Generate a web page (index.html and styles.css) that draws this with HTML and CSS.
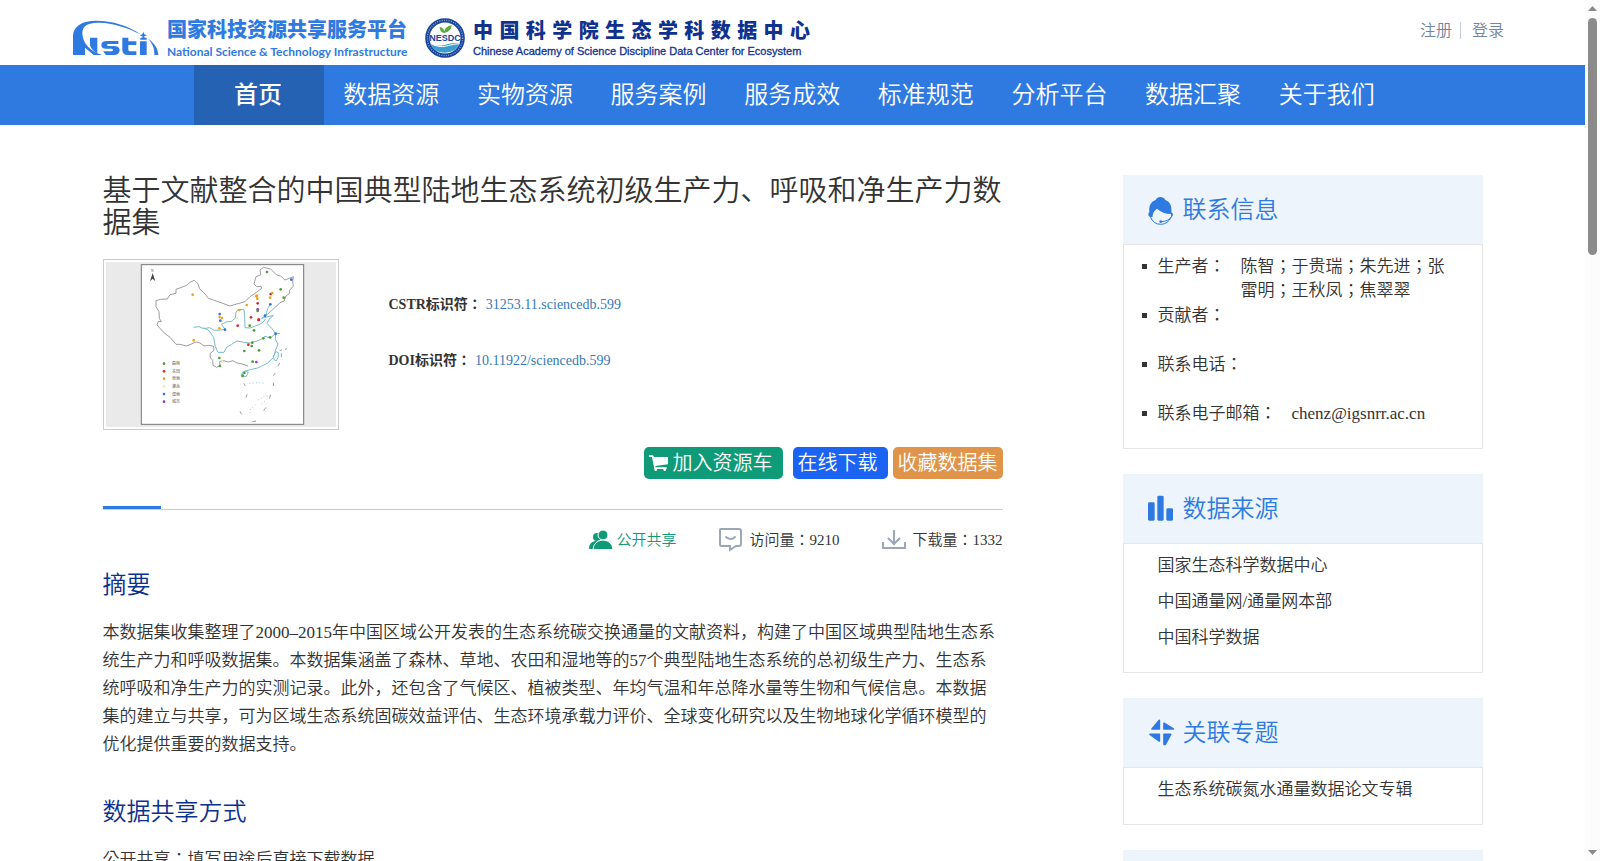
FILE: index.html
```html
<!DOCTYPE html>
<html lang="zh-CN">
<head>
<meta charset="utf-8">
<title>国家生态科学数据中心</title>
<link rel="stylesheet" href="styles.css">
</head>
<body>
<header class="top">
  <a class="nsti" href="#">
    <svg class="nsti-mark" viewBox="0 0 258 108" aria-hidden="true">
      <g fill="#2f7ae1">
        <path d="M0 105V45C3 17 29 2 68 2c53 0 96 15 137 42-44-22-85-35-126-36C46 7 28 17 28 39c0 30 24 56 60 66H62L36 83v22z"/>
        <path d="M51 53h22v47C60 93 53 84 51 76z"/>
        <path d="M136 63H101q-16 0-16 12t16 11h13q6 0 6 4t-6 4H90l9 11h22q19 0 19-14 0-13-19-13h-14q-5 0-5-3t5-3h29z"/>
        <path d="M148 53h18v11h24v11h-24v14q0 5 6 5h18v11h-25q-17 0-17-15z"/>
        <path d="M201 64h20v41h-20zM202 54q9-4 19 0v5h-19z"/>
        <path d="M211 35l3 8 8 3-8 3-3 8-3-8-8-3 8-3z"/>
        <path d="M224 55c20 14 31 31 32 50h-12c1-19-5-34-20-50z"/>
      </g>
    </svg>
    <span class="nsti-text">
      <strong class="nsti-cn">国家科技资源共享服务平台</strong>
      <span class="nsti-en">National Science &amp; Technology Infrastructure</span>
    </span>
  </a>
  <a class="nesdc" href="#">
    <svg class="nesdc-mark" viewBox="0 0 120 120" aria-hidden="true">
      <circle cx="60" cy="60" r="53" fill="#fff" stroke="#17459b" stroke-width="13"/>
      <circle cx="60" cy="60" r="53" fill="none" stroke="#8fa8d4" stroke-width="4" stroke-dasharray="3 4"/>
      <path d="M17 77q22 10 44 3t43-4q-11 28-44 28-32 0-43-27z" fill="#3b9fce"/>
      <path d="M18 77q24 13 46 7t40-7" fill="none" stroke="#fff" stroke-width="3"/>
      <path d="M57 45q-13-3-13-18 12 2 14 13 3-15 22-19-1 19-20 23z" fill="#58ae3c"/>
      <text class="nesdc-seal" x="60" y="70" text-anchor="middle">NESDC</text>
    </svg>
    <span class="nesdc-text">
      <strong class="nesdc-cn">中国科学院生态学科数据中心</strong>
      <span class="nesdc-en">Chinese Academy of Science Discipline Data Center for Ecosystem</span>
    </span>
  </a>
  <div class="account"><a href="#">注册</a><a href="#">登录</a></div>
</header>

<nav class="nav">
  <ul>
    <li class="active"><a href="#">首页</a></li>
    <li><a href="#">数据资源</a></li>
    <li><a href="#">实物资源</a></li>
    <li><a href="#">服务案例</a></li>
    <li><a href="#">服务成效</a></li>
    <li><a href="#">标准规范</a></li>
    <li><a href="#">分析平台</a></li>
    <li><a href="#">数据汇聚</a></li>
    <li><a href="#">关于我们</a></li>
  </ul>
</nav>

<div class="page">
  <main class="detail">
    <h1>基于文献整合的中国典型陆地生态系统初级生产力、呼吸和净生产力数据集</h1>
    <div class="summary">
      <svg class="thumb" viewBox="48 36 690 495" role="img" aria-label="站点分布图">
        <rect x="48" y="36" width="690" height="495" fill="#eaeaea"/>
        <rect x="154" y="44" width="487" height="479" fill="#fff" stroke="#777" stroke-width="3"/>
        <path d="M180 94l8-25 8 25-8-8z" fill="#444"/>
        <text class="map-north" x="183" y="65">N</text>
        <g fill="none" stroke="#8a8a8a" stroke-width="2.5" stroke-linejoin="round">
          <path d="M371 289L357 286 342 288 330 279 318 276 300 284 289 288 270 283 258 283 240 262 224 250 212 237 201 225 205 214 214 215 208 205 207 185 198 170 198 152 212 148 232 147 240 134 258 130 258 118 275 112 290 106 300 97 313 91 323 100 329 116 345 132 355 145 370 150 390 157 420 168 440 162 465 155 480 140 500 127 515 115 513 109 500 110 492 102 498 80 512 75 510 60 520 52 542 57 560 75 572 78 585 90 600 84 610 80 608 95 610 108 598 122 599 130 588 138 582 153 570 158 555 173"/>
          <path d="M371 289l1 12-12 10 1 12 7 8 1 15 11 6 10-5-1-12 12-3 14 4 14-4 10 6 17 4 18 6"/>
        </g>
        <g fill="none" stroke="#78bccb" stroke-width="3" stroke-linejoin="round">
          <path d="M311 232l16-2 14 6 18-3 14 8 18-1 14-2-11-15 14-7 16-2 12-10 2-17 6-8h18l2 20 1 34 15 1 13-5 14-5 13-8 7-10"/>
          <path d="M340 233l17 9 14 20 5 28 8 17h18l8-15 15-9 16-10 22 4 18 2 20-6 12-5 12-9 17 5 12-12 16-2"/>
          <path d="M541 163l-8 12-5 22-13 8M555 173l-12 10-15 14M515 205l35-9-13 12-6 12 15 16 11 15-1 17 8 14-8 21-6 20-18 17-29 14-22 5-18 5"/>
          <path d="M457 367l10-4 8 4-6 12-14 2zM553 330l-3-11 8-14 7 3-1 15-6 10z"/>
        </g>
        <g fill="none" stroke="#a9c9cf" stroke-width="3" stroke-dasharray="3 7">
          <path d="M478 400l20-2 24 1M503 450l24-12 20-2M480 480l20-20M515 462l24-22M478 488l10-2"/>
        </g>
        <path d="M574 310v12M569 339l-5 10M556 369l-6 8M550 398l1 10M461 400l5 8M471 433l-3 10M541 434l-2 12M450 484l5 9M528 472l-7 10M487 515l11-2M569 302l7-3M585 298l6-2" stroke="#8d8d8d" stroke-width="2.5"/>
        <g fill="#46a02f"><circle cx="531" cy="66" r="4"/><circle cx="572" cy="118" r="4"/><circle cx="581" cy="143" r="4"/><circle cx="503" cy="183" r="4"/><circle cx="479" cy="227" r="4"/><circle cx="492" cy="241" r="4"/><circle cx="520" cy="265" r="4"/><circle cx="540" cy="262" r="4"/><circle cx="487" cy="278" r="4"/><circle cx="485" cy="288" r="4"/><circle cx="463" cy="303" r="4"/><circle cx="507" cy="301" r="4"/><circle cx="488" cy="335" r="4"/><circle cx="388" cy="324" r="4"/><circle cx="390" cy="348" r="4"/><circle cx="463" cy="369" r="4"/><circle cx="458" cy="377" r="4"/><circle cx="222" cy="341" r="4"/></g>
        <g fill="#df2430"><circle cx="542" cy="132" r="4"/><circle cx="503" cy="160" r="4"/><circle cx="483" cy="202" r="4"/><circle cx="443" cy="227" r="4"/><circle cx="506" cy="209" r="5"/><circle cx="475" cy="284" r="4"/><circle cx="222" cy="364" r="4"/></g>
        <g fill="#eaa31e"><circle cx="308" cy="134" r="4"/><circle cx="311" cy="271" r="4"/><circle cx="500" cy="138" r="5"/><circle cx="502" cy="146" r="4"/><circle cx="547" cy="129" r="4"/><circle cx="540" cy="143" r="4"/><circle cx="470" cy="165" r="4"/><circle cx="448" cy="180" r="4"/><circle cx="389" cy="201" r="4"/><circle cx="396" cy="204" r="4"/><circle cx="388" cy="235" r="4"/><circle cx="222" cy="386" r="4"/></g>
        <g fill="#2b72dd"><circle cx="604" cy="89" r="4"/><circle cx="541" cy="163" r="4"/><circle cx="525" cy="197" r="4"/><circle cx="389" cy="192" r="4"/><circle cx="391" cy="212" r="4"/><circle cx="405" cy="239" r="4"/><circle cx="557" cy="251" r="4"/><circle cx="222" cy="432" r="4"/></g>
        <g fill="#9a2fe0"><circle cx="503" cy="178" r="4"/><circle cx="499" cy="336" r="4"/><circle cx="222" cy="455" r="4"/></g>
        <g fill="#fff" stroke="#e3cf97" stroke-width="2"><circle cx="440" cy="204" r="3"/><circle cx="397" cy="335" r="3"/><circle cx="222" cy="409" r="3"/></g>
        <g class="map-legend"><text x="246" y="346">森林</text><text x="246" y="369">农田</text><text x="246" y="391">草地</text><text x="246" y="414">灌丛</text><text x="246" y="437">湿地</text><text x="246" y="460">城市</text></g>
      </svg>
      <dl class="ids">
        <div><dt class="mid">CSTR标识符：</dt><dd><a href="#">31253.11.sciencedb.599</a></dd></div>
        <div><dt class="mid">DOI标识符：</dt><dd><a href="#">10.11922/sciencedb.599</a></dd></div>
      </dl>
    </div>
    <div class="actions">
      <button type="button" class="btn cart">
        <svg viewBox="0 0 57 48" aria-hidden="true"><path fill="#fff" d="M0 1h12l3 5h42v22l-38 5 1 4h33v5H16L9 6H0z"/><circle cx="20" cy="44" r="4" fill="#fff"/><circle cx="47" cy="44" r="4" fill="#fff"/></svg>加入资源车</button>
      <button type="button" class="btn download">在线下载</button>
      <button type="button" class="btn favorite">收藏数据集</button>
    </div>
    <div class="rule"></div>
    <ul class="stats">
      <li class="open">
        <svg viewBox="0 0 24 20" aria-hidden="true"><g fill="#0f9b78"><circle cx="8" cy="7" r="4"/><path d="M0 19q0-7 6-8h5l-5 8z"/><g stroke="#fff"><circle cx="14" cy="5" r="5"/><path d="M4 19.500q1-9 10-9.500 9 .5 10 9.500z"/></g></g></svg>公开共享</li>
      <li>
        <svg viewBox="0 0 24 24" fill="none" stroke="#9ba7b9" stroke-width="2" aria-hidden="true"><path d="M2 1h18q2 0 2 2v13q0 2-2 2h-3l-6 4v-4H2q-1 0-1-2V2q0-1 1-1zM7 9q5 4 9 0" stroke-linecap="round"/></svg><span class="mid">访问量：9210</span></li>
      <li>
        <svg viewBox="0 0 24 20" fill="none" stroke="#9ba7b9" stroke-width="2" aria-hidden="true"><path d="M12 0v14M6 8l6 6 6-6M1 12v6h22v-6"/></svg><span class="mid">下载量：1332</span></li>
    </ul>
    <section>
      <h2>摘要</h2>
      <p>本数据集收集整理了2000–2015年中国区域公开发表的生态系统碳交换通量的文献资料，构建了中国区域典型陆地生态系统生产力和呼吸数据集。本数据集涵盖了森林、草地、农田和湿地等的57个典型陆地生态系统的总初级生产力、生态系统呼吸和净生产力的实测记录。此外，还包含了气候区、植被类型、年均气温和年总降水量等生物和气候信息。本数据集的建立与共享，可为区域生态系统固碳效益评估、生态环境承载力评价、全球变化研究以及生物地球化学循环模型的优化提供重要的数据支持。</p>
    </section>
    <section>
      <h2>数据共享方式</h2>
      <p class="mid">公开共享：填写用途后直接下载数据</p>
    </section>
  </main>

  <aside class="side">
    <section class="card">
      <h3><svg viewBox="0 -11 75 87" aria-hidden="true"><path fill="#2f7ae1" d="M4 47C2 27 9 14 23 10 27-2 47-2 52 10c14 5 20 18 18 37 7 2 6 15-1 14V52Q45 52 27 36 15 43 13 61q-12 2-12-8 0-5 3-6z"/><path d="M7 60q9 23 31 23 22 0 32-23-8 15-32 15" fill="none" stroke="#2f7ae1" stroke-width="3"/><circle cx="38" cy="75" r="4" fill="#2f7ae1"/></svg>联系信息</h3>
      <ul class="contact mid">
        <li><span>生产者：</span><span>陈智；于贵瑞；朱先进；张雷明；王秋凤；焦翠翠</span></li>
        <li><span>贡献者：</span></li>
        <li><span>联系电话：</span></li>
        <li><span>联系电子邮箱：</span><span>chenz@igsnrr.ac.cn</span></li>
      </ul>
    </section>
    <section class="card">
      <h3><svg viewBox="0 -4 75 87" aria-hidden="true"><g fill="#2f7ae1"><rect y="27" width="20" height="55" rx="4"/><rect x="28" y="7" width="19" height="75" rx="4"/><rect x="55" y="45" width="20" height="37" rx="4"/></g></svg>数据来源</h3>
      <ul class="links">
        <li><a href="#">国家生态科学数据中心</a></li>
        <li><a href="#">中国通量网/通量网本部</a></li>
        <li><a href="#">中国科学数据</a></li>
      </ul>
    </section>
    <section class="card">
      <h3><svg viewBox="-3 -4 75 87" aria-hidden="true"><g fill="#2f7ae1" stroke="#2f7ae1" stroke-width="5" stroke-linejoin="round"><path d="M31 9v26H9zM45 18v17h28zM3 51h28v20zM45 51h20L49 81h-4z"/></g></svg>关联专题</h3>
      <ul class="links">
        <li><a href="#">生态系统碳氮水通量数据论文专辑</a></li>
      </ul>
    </section>
    <section class="card">
      <h3></h3>
    </section>
  </aside>
</div>

<div class="scrollbar" aria-hidden="true">
  <svg viewBox="0 0 9 5"><path d="M0 5l4.500-5L9 5z" fill="#8b8b8b"/></svg>
  <div class="track"><div class="thumb-bar"></div></div>
  <svg viewBox="0 0 9 5"><path d="M0 0l4.500 5L9 0z" fill="#8b8b8b"/></svg>
</div>
</body>
</html>
```
FILE: styles.css
```css
* { box-sizing: border-box; }
html { scrollbar-width: none; }
body {
  margin: 0;
  padding-right: 15px;
  background: #fff;
  color: #333;
  font-family: "Liberation Serif", "Noto Sans CJK SC", serif;
  font-size: 17px;
  font-weight: 350;
}
h1, h2, h3, p, ul, dl, dd { margin: 0; padding: 0; font-weight: 350; }
ul { list-style: none; }
a { color: inherit; text-decoration: none; }
svg { display: block; flex: none; }
/* Full-width colons and semicolons sit in the middle of their cell */
.mid {
  font-family: "Liberation Serif", "Noto Sans CJK TC", serif;
  font-feature-settings: "locl" 0;
}

.top {
  display: flex;
  align-items: flex-start;
  height: 65px;
  padding: 18px 81px 0 73px;
}
.nsti { display: flex; color: #2f7ae1; }
.nsti-mark { width: 86px; height: 36px; margin-top: 2px; }
.nsti-text { display: flex; flex-direction: column; min-width: 244px; margin-left: 8px; }
.nsti-cn {
  font: 900 20px/22px "Noto Sans CJK SC", sans-serif;
}
.nsti-en {
  margin-top: 3px;
  font: 700 12px/18px Lato, sans-serif;
  white-space: nowrap;
}
.nesdc { display: flex; margin-left: 14px; color: #0f328f; }
.nesdc-mark { width: 40px; height: 40px; }
.nesdc-seal { font: 700 27px "Liberation Sans", sans-serif; fill: #17459b; }
.nesdc-text { width: 337px; margin-left: 8px; }
.nesdc-cn {
  display: block;
  font: 900 20px/23px "Noto Sans CJK SC", sans-serif;
  text-align: justify;
  text-align-last: justify;
}
.nesdc-en {
  display: block;
  margin-top: 1px;
  font: 11px/18px "Liberation Sans", sans-serif;
  -webkit-text-stroke: 0.3px #0f328f;
  white-space: nowrap;
}
.account {
  display: flex;
  margin-left: auto;
  padding-top: 4px;
  color: #7086a6;
  font-size: 16px;
  line-height: 17px;
}
.account a + a { margin-left: 8px; padding-left: 11px; border-left: 1px solid #c3cddc; }

.nav { background: #2f7ae1; color: #fff; font-size: 24px; line-height: 60px; }
.nav ul { display: flex; max-width: 1201px; margin: 0 auto; padding-left: 2px; }
.nav li { flex: 1; padding-left: 1px; text-align: center; }
.nav .active { flex: 0 0 130px; padding: 0 2px 0 0; background: #2562b4; font-weight: 500; }
.nav a { display: block; }

.page {
  display: flex;
  gap: 120px;
  max-width: 1380px;
  margin: 0 auto;
  padding-top: 50px;
}
.detail { flex: 1; min-width: 0; }
h1 { font-size: 29px; line-height: 32px; }
.summary { display: flex; margin-top: 20px; }
.thumb { width: 236px; height: 171px; padding: 2px; border: 1px solid #ccc; }
.map-north { font: 11px "Liberation Serif", serif; fill: #444; }
.map-legend { font: 12px "Noto Sans CJK SC", sans-serif; fill: #555; }
.ids { margin-left: 50px; padding-top: 36px; font-size: 14px; line-height: 20px; }
.ids div { display: flex; gap: 4px; margin-bottom: 36px; }
.ids dt { font-weight: bold; }
.ids dd { color: #337ab7; }

.actions { display: flex; justify-content: flex-end; margin-top: 17px; }
.btn {
  display: flex;
  align-items: center;
  gap: 5px;
  height: 32px;
  padding: 0 5px;
  border: 0;
  border-radius: 5px;
  color: #fff;
  font: 350 20px/32px "Liberation Serif", "Noto Sans CJK SC", serif;
  white-space: nowrap;
}
.btn svg { width: 19px; height: 16px; }
.cart { margin-right: 10px; padding-right: 10px; background: #0f9b78; }
.download { margin-right: 5px; padding-right: 10px; background: #1b63f2; }
.favorite { background: #e0944a; }

.rule { height: 4px; margin-top: 27px; border-bottom: 1px solid #ccc; }
.rule::before { content: ""; display: block; width: 58px; height: 3px; background: #2f7ae1; }

.stats {
  display: flex;
  justify-content: flex-end;
  gap: 43px;
  margin-top: 18px;
  font-size: 15px;
  line-height: 24px;
}
.stats li { display: flex; align-items: center; gap: 6px; }
.stats .open { gap: 3px; color: #0f9b78; }
.stats svg { width: 24px; }

h2 { color: #0b318f; font-size: 24px; line-height: 28px; }
.detail section { margin-top: 19px; }
.detail section + section { margin-top: 39px; }
.detail section p { margin-top: 20px; line-height: 28px; }

.side { flex: none; width: 360px; }
.card { margin-bottom: 25px; border: 1px solid #e6e6e6; border-top: 0; }
.card h3 {
  display: flex;
  align-items: center;
  gap: 10px;
  height: 70px;
  margin: 0 -1px;
  padding: 0 0 4px 25px;
  border-bottom: 1px solid #e6e6e6;
  background: #edf4fb;
  color: #2f7ae1;
  font-size: 24px;
}
.card h3 svg { width: 25px; height: 29px; overflow: visible; }
.contact { padding: 10px 32px 22px 34px; line-height: 24px; }
.contact li { position: relative; display: flex; gap: 15px; min-height: 49px; }
.contact li:last-child { min-height: 0; }
.contact li > span:first-child { flex: none; }
.contact li::before {
  content: "";
  position: absolute;
  top: 9px;
  left: -16px;
  width: 5px;
  height: 5px;
  background: #333;
}
.links { padding: 4px 34px 16px; line-height: 36px; }

.scrollbar {
  position: fixed;
  top: 0;
  right: 0;
  bottom: 0;
  display: flex;
  flex-direction: column;
  align-items: center;
  width: 15px;
  padding: 6px 0;
  background: #fcfcfc;
}
.scrollbar svg { width: 9px; height: 5px; }
.track { flex: 1; padding: 7px 0; }
.thumb-bar { width: 9px; height: 237px; border-radius: 5px; background: #8b8b8b; }
```
